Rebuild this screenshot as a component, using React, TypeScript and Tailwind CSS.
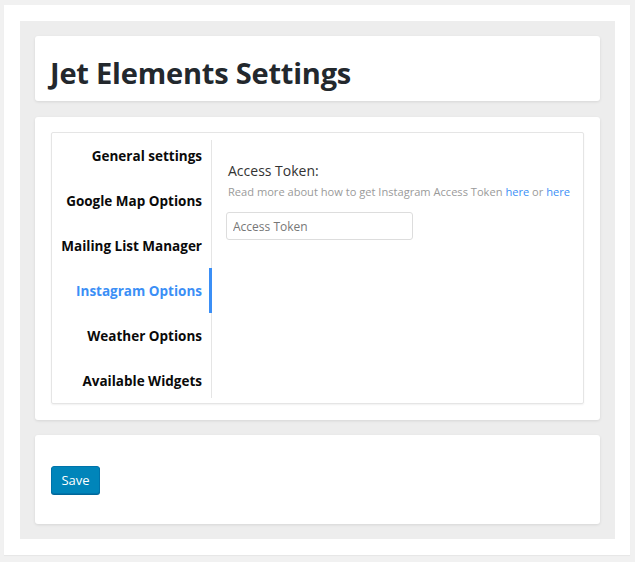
import React, { useState } from 'react';

const tabs = [
  'General settings',
  'Google Map Options',
  'Mailing List Manager',
  'Instagram Options',
  'Weather Options',
  'Available Widgets',
];

const App: React.FC = () => {
  const [active, setActive] = useState('Instagram Options');

  return (
    <div className="min-h-[562px] bg-[#f1f1f1] pt-[5px] pl-[4px] font-['Open_Sans',sans-serif]">
      <div className="w-[626px] h-[550px] bg-white pt-[16px] pl-[16px] shadow-[0_1px_1px_rgba(0,0,0,0.04)]">
        <div className="w-[595px] h-[518px] bg-[#ededed] p-[15px] flex flex-col gap-[16px]">
          {/* Header */}
          <div className="h-[65px] bg-white rounded-[3px] shadow-[0_1px_3px_rgba(0,0,0,0.1)] flex items-center pl-[15px] pt-[8px]">
            <h1 className="text-[29px] font-bold text-[#23282d] tracking-[-0.2px]">Jet Elements Settings</h1>
          </div>

          {/* Settings */}
          <div className="h-[303px] bg-white rounded-[3px] shadow-[0_1px_3px_rgba(0,0,0,0.1)] pt-[15px] px-[16px]">
            <div className="h-[272px] border border-[#e5e5e5] rounded-[2px] shadow-[0_1px_2px_rgba(0,0,0,0.06)] flex">
              {/* Tabs */}
              <div className="relative w-[160px] shrink-0">
                <div className="absolute right-0 top-[7px] bottom-[5px] w-px bg-[#e5e5e5]" />
                {tabs.map((tab) => (
                  <button
                    key={tab}
                    onClick={() => setActive(tab)}
                    className={`relative block w-full h-[45px] text-right pr-[10px] pt-[2px] text-[13.5px] font-bold ${
                      active === tab ? 'text-[#3b8ff6]' : 'text-[#0a0a0a]'
                    }`}
                  >
                    {tab}
                    {active === tab && <span className="absolute right-0 top-0 h-full w-[3px] bg-[#3b8ff6]" />}
                  </button>
                ))}
              </div>

              {/* Content */}
              <div className="pl-[16px] pt-[29px]">
                <div className="text-[14px] text-[#333] leading-[18px]">Access Token:</div>
                <div className="mt-[4px] text-[11.1px] text-[#9a9a9a] leading-[16px]">
                  Read more about how to get Instagram Access Token{' '}
                  <a className="text-[#3b8ff6]">here</a> or <a className="text-[#3b8ff6]">here</a>
                </div>
                <input
                  type="text"
                  placeholder="Access Token"
                  className="mt-[12px] -ml-[2px] w-[187px] h-[28px] border border-[#dddddd] rounded-[3px] px-[6px] text-[12px] placeholder:text-[#777] outline-none"
                />
              </div>
            </div>
          </div>

          {/* Save */}
          <div className="h-[89px] bg-white rounded-[3px] shadow-[0_1px_3px_rgba(0,0,0,0.1)] pt-[31px] pl-[16px] -mt-[1px]">
            <button className="w-[49px] h-[28px] bg-[#0085ba] border border-[#0073aa] rounded-[3px] shadow-[0_1px_0_#006799] text-white text-[13px] leading-none">
              Save
            </button>
          </div>
        </div>
      </div>
    </div>
  );
};

export default App;
